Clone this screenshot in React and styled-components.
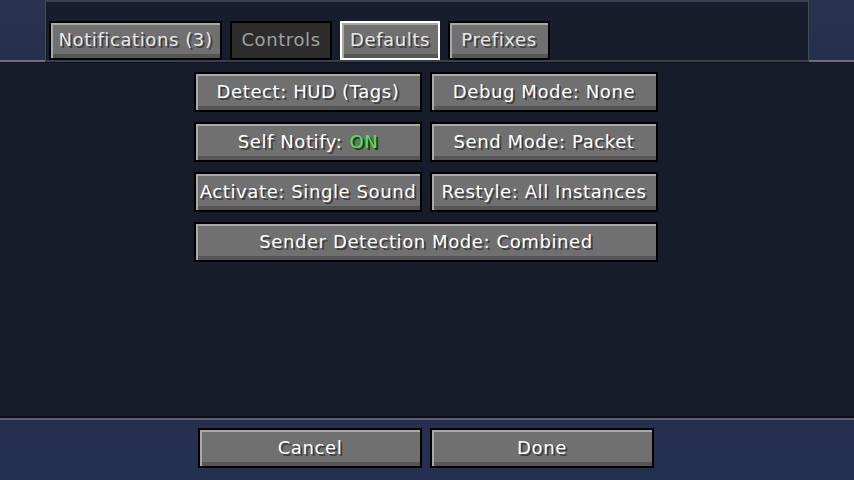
import React from 'react';
import styled, { createGlobalStyle, css } from 'styled-components';

const GlobalStyle = createGlobalStyle`
  html, body {
    margin: 0;
    padding: 0;
    width: 854px;
    height: 480px;
    overflow: hidden;
    background: #171c2a;
  }
  #root {
    width: 854px;
    height: 480px;
  }
  * {
    box-sizing: border-box;
  }
`;

const Screen = styled.div`
  width: 854px;
  height: 480px;
  display: flex;
  flex-direction: column;
  font-family: 'DejaVu Sans', 'Liberation Sans', sans-serif;
  background: #171c2a;
`;

const Header = styled.div`
  height: 62px;
  display: flex;
  flex-shrink: 0;
  border-bottom: 2px solid #3a3e49;
`;

const Side = styled.div`
  width: ${(p) => p.$w}px;
  background: linear-gradient(180deg, #29324f 0%, #26304c 100%);
  box-shadow: inset 0 -2px 0 #6b7080;
  margin-bottom: -2px;
`;

const TabStrip = styled.div`
  flex: 1;
  display: flex;
  gap: 8px;
  padding: 19px 0 0 3px;
  background: #181d2b;
  border-top: 2px solid #3b4151;
  border-left: 1px solid #444a5a;
  border-right: 1px solid #444a5a;
`;

const Main = styled.div`
  flex: 1;
  display: flex;
  flex-direction: column;
  align-items: center;
  gap: 10px;
  padding-top: 9px;
  background: #171c2a;
  border-top: 1px solid #10131b;
`;

const Grid = styled.div`
  display: grid;
  grid-template-columns: 228px 228px;
  gap: 10px 8px;
  margin-left: -2px;
`;

const Footer = styled.div`
  height: 62px;
  flex-shrink: 0;
  display: flex;
  justify-content: center;
  gap: 8px;
  padding-top: 8px;
  margin-left: -2px;
  background: linear-gradient(180deg, #26304e 0%, #243050 100%);
  border-top: 2px solid #5b6172;
  box-shadow: 0 -2px 0 #0c0f16;
`;

const buttonFace = css`
  height: 40px;
  display: flex;
  align-items: center;
  justify-content: center;
  border: 2px solid #000;
  background: #707070;
  box-shadow: inset 2px 2px 0 #a9a9a9, inset 0 -4px 0 #565656;
  color: #ffffff;
  font-size: 18px;
  white-space: nowrap;
  text-shadow: 2px 2px 0 #3e3e3e;
  padding-bottom: 2px;
  letter-spacing: 0.6px;
`;

const Button = styled.div`
  ${buttonFace}
  width: ${(p) => (p.$wide ? 464 : p.$w || 228)}px;
  grid-column: ${(p) => (p.$wide ? '1 / span 2' : 'auto')};
`;

const Tab = styled.div`
  ${buttonFace}
  height: 39px;
  width: ${(p) => p.$w}px;
  color: #e6e6e6;
  ${(p) =>
    p.$disabled &&
    css`
      background: #2c2c2c;
      box-shadow: none;
      color: #a0a0a0;
      text-shadow: none;
    `}
  ${(p) =>
    p.$selected &&
    css`
      border-color: #ffffff;
    `}
`;

const On = styled.span`
  color: #4ee44e;
  text-shadow: 2px 2px 0 #14400f;
  margin-left: 7px;
`;

const tabs = [
  { label: 'Notifications (3)', w: 173 },
  { label: 'Controls', w: 102, disabled: true },
  { label: 'Defaults', w: 100, selected: true },
  { label: 'Prefixes', w: 102 },
];

export default function App() {
  return (
    <Screen>
      <GlobalStyle />
      <Header>
        <Side $w={45} />
        <TabStrip>
          {tabs.map((t) => (
            <Tab key={t.label} $w={t.w} $disabled={t.disabled} $selected={t.selected}>
              {t.label}
            </Tab>
          ))}
        </TabStrip>
        <Side $w={45} />
      </Header>
      <Main>
        <Grid>
          <Button>Detect: HUD (Tags)</Button>
          <Button>Debug Mode: None</Button>
          <Button>
            Self Notify:<On>ON</On>
          </Button>
          <Button>Send Mode: Packet</Button>
          <Button>Activate: Single Sound</Button>
          <Button>Restyle: All Instances</Button>
          <Button $wide>Sender Detection Mode: Combined</Button>
        </Grid>
      </Main>
      <Footer>
        <Button $w={224}>Cancel</Button>
        <Button $w={224}>Done</Button>
      </Footer>
    </Screen>
  );
}
